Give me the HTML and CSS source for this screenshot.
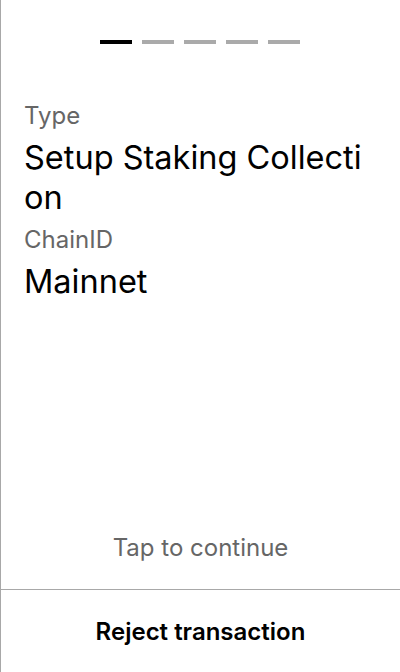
FILE: index.html
```html
<!DOCTYPE html>
<html>
<head>
<meta charset="utf-8">
<link rel="stylesheet" href="styles.css">
</head>
<body>
<div class="screen">
  <div class="progress">
    <span class="bar active"></span>
    <span class="bar"></span>
    <span class="bar"></span>
    <span class="bar"></span>
    <span class="bar"></span>
  </div>
  <div class="content">
    <div class="label">Type</div>
    <div class="value">Setup Staking Collection</div>
    <div class="label">ChainID</div>
    <div class="value">Mainnet</div>
  </div>
  <div class="tap">Tap to continue</div>
  <div class="reject">Reject transaction</div>
</div>
</body>
</html>
```
FILE: styles.css
```css
* { box-sizing: border-box; }
html, body { margin: 0; padding: 0; background: #fff; }
body { font-family: Inter, "Noto Sans", sans-serif; color: #000; }
.screen {
  width: 400px;
  height: 672px;
  border-left: 1px solid #a8a8a8;
  display: flex;
  flex-direction: column;
}
.progress {
  display: flex;
  justify-content: center;
  gap: 10px;
  padding-top: 40px;
  padding-right: 1px;
}
.bar { width: 32px; height: 4px; background: #aaaaaa; }
.bar.active { background: #000; }
.content {
  padding: 57px 23px 0 23px;
  flex: 1;
  display: flex;
  flex-direction: column;
  gap: 7px;
}
.label {
  font-size: 24px;
  line-height: 30px;
  color: #666;
}
.value {
  font-size: 32.5px;
  line-height: 40px;
  word-break: break-all;
}
.tap {
  text-align: center;
  font-size: 24px;
  line-height: 30px;
  color: #666;
  padding-bottom: 26px;
}
.reject {
  border-top: 1px solid #a8a8a8;
  height: 83px;
  display: flex;
  align-items: center;
  justify-content: center;
  font-size: 24px;
  font-weight: 600;
}
```
